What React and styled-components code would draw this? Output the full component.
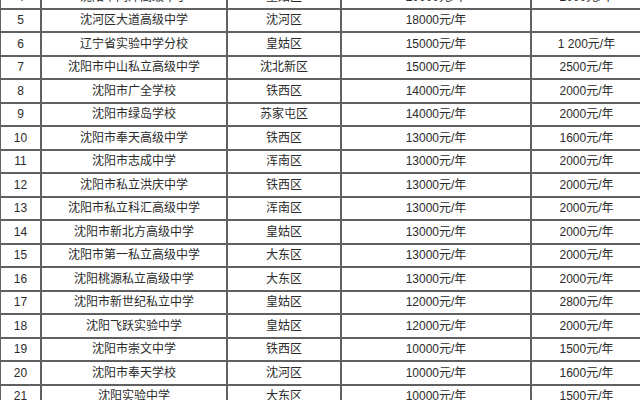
import React from 'react';
import styled, { createGlobalStyle } from 'styled-components';

const GlobalStyle = createGlobalStyle`
  html, body {
    margin: 0;
    padding: 0;
    background: #fff;
  }
  body {
    font-family: "Liberation Sans", "Noto Sans CJK SC", sans-serif;
  }
`;

const Frame = styled.div`
  width: 640px;
  height: 400px;
  overflow: hidden;
  background: #fff;
`;

const Table = styled.table`
  margin: -16px 0 0 -1px;
  width: 642px;
  border-collapse: collapse;
  table-layout: fixed;
`;

const Col = styled.col`
  width: ${(p) => p.$w}px;
`;

const Row = styled.tr`
  height: 23.5px;
`;

const Cell = styled.td`
  border: 2px solid #606060;
  padding: 0;
  text-align: center;
  vertical-align: middle;
  font-size: 12px;
  line-height: 14px;
  color: #2b2b2b;
  white-space: nowrap;
  overflow: hidden;
`;

const widths = [41, 186, 114, 190, 111];

const rows = [
  ['4', '沈阳市同泽高级中学', '皇姑区', '20000元/年', '2000元/年'],
  ['5', '沈河区大道高级中学', '沈河区', '18000元/年', ''],
  ['6', '辽宁省实验中学分校', '皇姑区', '15000元/年', '1 200元/年'],
  ['7', '沈阳市中山私立高级中学', '沈北新区', '15000元/年', '2500元/年'],
  ['8', '沈阳市广全学校', '铁西区', '14000元/年', '2000元/年'],
  ['9', '沈阳市绿岛学校', '苏家屯区', '14000元/年', '2000元/年'],
  ['10', '沈阳市奉天高级中学', '铁西区', '13000元/年', '1600元/年'],
  ['11', '沈阳市志成中学', '浑南区', '13000元/年', '2000元/年'],
  ['12', '沈阳市私立洪庆中学', '铁西区', '13000元/年', '2000元/年'],
  ['13', '沈阳市私立科汇高级中学', '浑南区', '13000元/年', '2000元/年'],
  ['14', '沈阳市新北方高级中学', '皇姑区', '13000元/年', '2000元/年'],
  ['15', '沈阳市第一私立高级中学', '大东区', '13000元/年', '2000元/年'],
  ['16', '沈阳桃源私立高级中学', '大东区', '13000元/年', '2000元/年'],
  ['17', '沈阳市新世纪私立中学', '皇姑区', '12000元/年', '2800元/年'],
  ['18', '沈阳飞跃实验中学', '皇姑区', '12000元/年', '2000元/年'],
  ['19', '沈阳市崇文中学', '铁西区', '10000元/年', '1500元/年'],
  ['20', '沈阳市奉天学校', '沈河区', '10000元/年', '1600元/年'],
  ['21', '沈阳实验中学', '大东区', '10000元/年', '1500元/年'],
];

const App = () => {
  return (
    <Frame>
      <GlobalStyle />
      <Table>
        <colgroup>
          {widths.map((w, i) => (
            <Col key={i} $w={w} />
          ))}
        </colgroup>
        <tbody>
          {rows.map((r) => (
            <Row key={r[0]}>
              {r.map((v, i) => (
                <Cell key={i}>{v}</Cell>
              ))}
            </Row>
          ))}
        </tbody>
      </Table>
    </Frame>
  );
};

export default App;
